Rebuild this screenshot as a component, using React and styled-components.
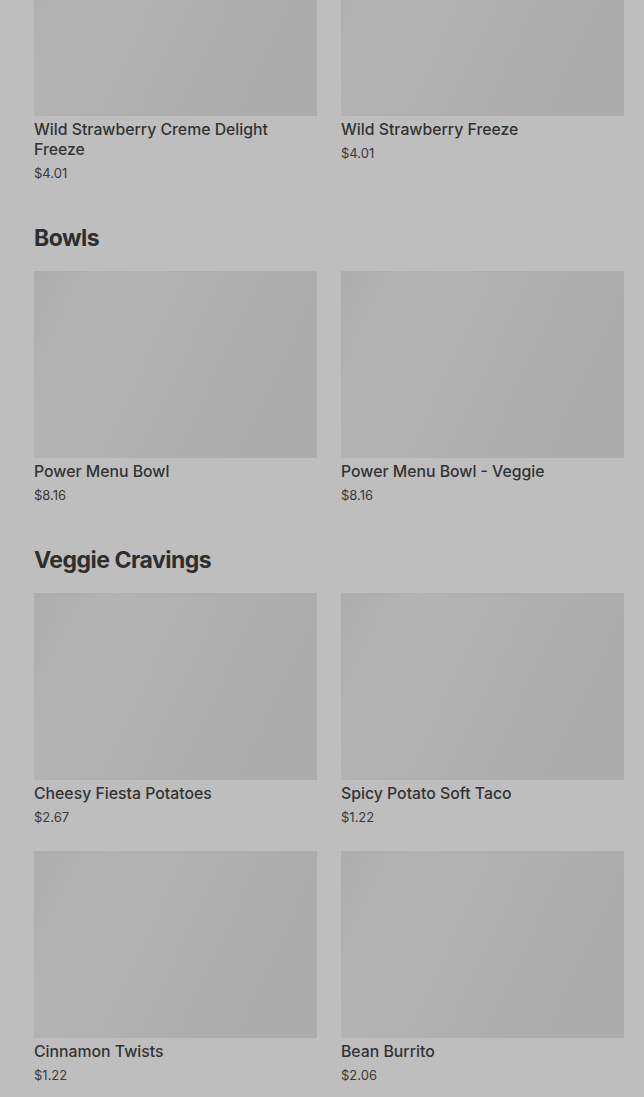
import React from 'react'
import styled, { createGlobalStyle } from 'styled-components'

const menu = [
    {
        title: null,
        items: [
            { name: 'Wild Strawberry Creme Delight Freeze', price: '$4.01' },
            { name: 'Wild Strawberry Freeze', price: '$4.01' },
        ],
    },
    {
        title: 'Bowls',
        items: [
            { name: 'Power Menu Bowl', price: '$8.16' },
            { name: 'Power Menu Bowl - Veggie', price: '$8.16' },
        ],
    },
    {
        title: 'Veggie Cravings',
        items: [
            { name: 'Cheesy Fiesta Potatoes', price: '$2.67' },
            { name: 'Spicy Potato Soft Taco', price: '$1.22' },
            { name: 'Cinnamon Twists', price: '$1.22' },
            { name: 'Bean Burrito', price: '$2.06' },
        ],
    },
]

function App() {
    return (
        <>
            <GlobalStyle />
            <Page>
                {
                    menu.map((section, i) => (
                        <Section key={i} first={!section.title}>
                            {section.title && <SectionTitle>{section.title}</SectionTitle>}
                            <Grid>
                                {
                                    section.items.map(item => (
                                        <Card key={item.name}>
                                            <Thumb />
                                            <ItemName>{item.name}</ItemName>
                                            <ItemPrice>{item.price}</ItemPrice>
                                        </Card>
                                    ))
                                }
                            </Grid>
                        </Section>
                    ))
                }
            </Page>
        </>
    )
}

export default App

const GlobalStyle = createGlobalStyle`
    html, body {
        margin: 0;
        background: #bebebe;
        overflow: hidden;
    }
    body {
        font-family: Inter, "Noto Sans", sans-serif;
        color: #2f2f2f;
    }
`
const Page = styled.div`
    height: 1097px;
    overflow: hidden;
    padding: 0 20px 0 34px;
    background: #bebebe;
`
const Section = styled.section`
    margin-top: ${props => props.first ? '-71px' : '41px'};
`
const SectionTitle = styled.h2`
    margin: 0 0 18px;
    font-size: 23px;
    line-height: 29px;
    font-weight: 700;
    letter-spacing: -0.5px;
    color: #2e2e2e;
`
const Grid = styled.div`
    display: grid;
    grid-template-columns: 1fr 1fr;
    column-gap: 24px;
    row-gap: 24px;
`
const Card = styled.div`
    display: flex;
    flex-direction: column;
`
const Thumb = styled.div`
    height: 187px;
    background: linear-gradient(115deg, #adadad 0%, #b3b3b3 20%, #b1b1b1 40%, #adadad 70%, #acacac 100%);
`
const ItemName = styled.div`
    margin-top: 4px;
    font-size: 15.8px;
    line-height: 20px;
    font-weight: 500;
    color: #333333;
`
const ItemPrice = styled.div`
    margin-top: 3px;
    font-size: 13px;
    line-height: 20px;
    color: #3a3a3a;
`
